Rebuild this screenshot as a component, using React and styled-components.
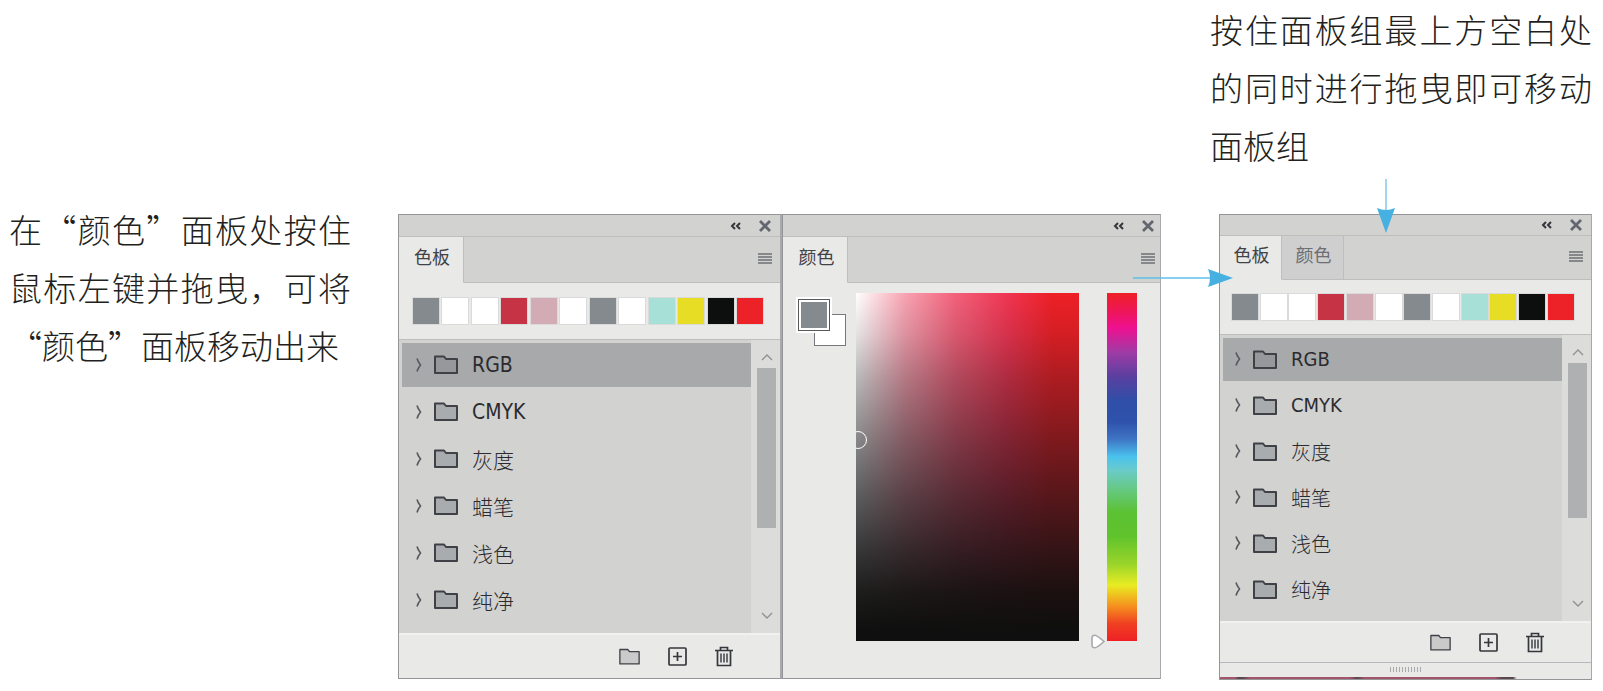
import { useState } from 'react'
import styled, { createGlobalStyle } from 'styled-components'

const GlobalStyle = createGlobalStyle`
  * {
    box-sizing: border-box;
  }
  body {
    margin: 0;
    background: #fff;
    color: #231f20;
    font-family: 'DejaVu Sans Condensed', 'Noto Sans CJK SC', sans-serif;
  }
  button {
    margin: 0;
    padding: 0;
    border: none;
    background: none;
    color: inherit;
    font: inherit;
    cursor: pointer;
  }
  svg {
    display: block;
  }
`

const Page = styled.main`
  display: flex;
  align-items: flex-start;
  padding: 0 11px 12px 9px;
`

const Caption = styled.p`
  margin: 0;
  font-family: 'Noto Sans CJK SC', sans-serif;
  font-size: 33px;
  font-weight: 300;
  line-height: 58px;
  text-align: justify;
`

const LeftNote = styled.div`
  flex: 0 0 342px;
  padding-top: 200px;
`

const Docked = styled.div`
  flex: 1;
  display: flex;
  align-items: stretch;
  margin: 214px 49px 0 47px;
`

const RightColumn = styled.div`
  flex: 0 0 382px;
`

const NoteAbove = styled.div`
  height: 214px;
`

const GroupWrapper = styled.div`
  position: relative;
  margin-left: 9px;
`

const Panel = styled.section`
  display: flex;
  flex-direction: column;
  flex: ${(props) => props.$grow || 1} 1 0;
  min-width: 0;
  border: 1px solid #939598;
  border-right: ${(props) => (props.$docked ? '2px' : '1px')} solid #a7a9ac;
  background: #e9e9e8;
`

const TitleBar = styled.header`
  display: flex;
  align-items: center;
  justify-content: flex-end;
  gap: 18px;
  height: ${(props) => (props.$dense ? '21px' : '22px')};
  padding-right: ${(props) => (props.$edge ? '6px' : '9px')};
  border-bottom: 1px solid #bebebe;
  background: #d2d2d1;
`

const TabBar = styled.div`
  display: flex;
  height: ${(props) => (props.$dense ? '44px' : '46px')};
  background: #d2d2d1;
`

const Tab = styled.button`
  width: ${(props) => (props.$dense ? '62px' : '65px')};
  padding: 0 0 7px 2px;
  border-right: 1px solid #bebebe;
  border-bottom: 1px solid ${(props) => (props.$active ? '#e9e9e8' : '#bebebe')};
  background: ${(props) => (props.$active ? '#e9e9e8' : '#cfcfcf')};
  color: ${(props) => (props.$active ? '#414247' : '#6d6e73')};
  font-size: 18px;
`

const TabSpace = styled.div`
  flex: 1;
  display: flex;
  align-items: center;
  justify-content: flex-end;
  padding-right: ${(props) => (props.$edge ? '5px' : '8px')};
  padding-bottom: 3px;
  border-bottom: 1px solid #bebebe;
`

const Swatches = styled.div`
  display: flex;
  align-items: center;
  justify-content: space-between;
  height: ${(props) => (props.$dense ? '55px' : '57px')};
  padding: 0 16px 0 ${(props) => (props.$dense ? '11px' : '13px')};
  border-bottom: 1px solid #bebebe;
`

const Swatch = styled.button`
  width: 28px;
  height: 28px;
  border: 1px solid #dadada;
  background: ${(props) => props.$color};
`

const ListArea = styled.div`
  display: flex;
  background: #d2d2d1;
`

const List = styled.ul`
  flex: 1;
  display: flex;
  flex-direction: column;
  gap: 3px;
  margin: 0;
  padding: 3px 0 ${(props) => (props.$dense ? '10px' : '11px')} 3px;
  list-style: none;
`

const Row = styled.button`
  display: flex;
  align-items: center;
  width: 100%;
  height: ${(props) => (props.$dense ? '43px' : '44px')};
  padding: 0 0 1px ${(props) => (props.$dense ? '11px' : '13px')};
  background: ${(props) => (props.$selected ? '#a7a9ab' : 'transparent')};
  font-size: ${(props) => (props.$dense ? '20px' : '21px')};
  font-weight: 300;
  text-align: left;
  color: #2b2b2f;
`

const ChevronSlot = styled.span`
  width: 19px;
`

const RowLabel = styled.span`
  margin-left: 14px;
`

const Scrollbar = styled.div`
  display: flex;
  flex-direction: column;
  width: 29px;
  padding-left: 6px;
  background: #dcdcda;
`

const ScrollButton = styled.button`
  display: flex;
  align-items: center;
  justify-content: center;
  width: 19px;
  height: ${(props) => (props.$down ? '36px' : '28px')};
  padding-top: ${(props) => (props.$down ? '0' : '6px')};
`

const ScrollTrack = styled.div`
  flex: 1;
  width: 19px;
`

const ScrollThumb = styled.div`
  height: 70%;
  background: #aeb0b2;
`

const Footer = styled.footer`
  display: flex;
  align-items: center;
  justify-content: flex-end;
  gap: 28px;
  height: ${(props) => (props.$dense ? '41px' : '45px')};
  padding: 0 47px 0 0;
  border-top: 2px solid #f1f1f1;
`

const Grip = styled.div`
  display: flex;
  justify-content: center;
  gap: 2px;
  height: 15px;
  padding-top: 4px;
  border-top: 1px solid #b5b9be;
`

const GripMark = styled.span`
  width: 1px;
  height: 5px;
  background: #a7a9ac;
`

const UnderStrip = styled.div`
  height: 2px;
  background: linear-gradient(
    to right,
    #a4556b 0 4%, #59474d 5% 6%,
    #a4556b 8% 35%, #59474d 37%,
    #a4556b 39% 74%, #59474d 76% 79%,
    #e9e9e8 80%
  );
`

const PickerBody = styled.div`
  flex: 1;
  display: flex;
  align-items: stretch;
  padding: 10px 23px 37px 14px;
`

const ColorPair = styled.div`
  position: relative;
  flex: 0 0 59px;
`

const Background = styled.button`
  position: absolute;
  left: 17px;
  top: 21px;
  width: 32px;
  height: 32px;
  border: 1px solid #77787b;
  background: #fff;
`

const Foreground = styled.button`
  position: absolute;
  left: 1px;
  top: 6px;
  width: 32px;
  height: 32px;
  border: 1px solid #58595b;
  outline: 2px solid #fff;
  box-shadow: inset 0 0 0 2px #fff;
  background: #858a8f;
`

const Field = styled.div`
  flex: 1;
  position: relative;
  overflow: hidden;
  background:
    linear-gradient(
      to bottom,
      rgba(14, 15, 14, 0),
      rgba(16, 18, 20, 0.12) 12%,
      rgba(16, 18, 20, 0.3) 25%,
      rgba(16, 18, 20, 0.5) 42%,
      rgba(16, 18, 20, 0.68) 58%,
      rgba(16, 17, 18, 0.84) 74%,
      rgba(14, 15, 14, 0.94) 86%,
      #0e0f0e 97%
    ),
    linear-gradient(
      to right,
      #fff,
      #f8a3b2 22%,
      #f3607a 45%,
      #f03552 68%,
      #ee2026 88%
    );
`

const Ring = styled.span`
  position: absolute;
  left: -7px;
  top: 138px;
  width: 18px;
  height: 18px;
  border: 1px solid #fff;
  border-radius: 50%;
`

const HueBox = styled.label`
  position: relative;
  flex: 0 0 58px;
  padding-left: 28px;
`

const HueBar = styled.span`
  display: block;
  height: 100%;
  background: linear-gradient(
    to bottom,
    #ee2025, #ee1560 6%, #ee1090 10%,
    #a03ba5 17%, #5a3fa0 24%, #2f4fa8 31%,
    #2f52ac 37%, #3f74c4 42%, #4ac2ee 47%,
    #6acbc8 51%, #66c988 56%, #5cc233 63%,
    #60c32c 70%, #9bd52a 78%, #e9ec22 84%,
    #f5901e 90%, #f04022 95%, #ee2025
  );
`

const HueInput = styled.input`
  position: absolute;
  inset: 0;
  width: 100%;
  height: 100%;
  margin: 0;
  opacity: 0;
  writing-mode: vertical-lr;
  direction: rtl;
  cursor: pointer;
`

const HueMarker = styled.span`
  position: absolute;
  left: 12px;
  margin-bottom: -8px;
`

const ArrowDown = styled.svg`
  position: absolute;
  left: 158px;
  top: -35px;
`

const ArrowRight = styled.svg`
  position: absolute;
  left: -86px;
  top: 55px;
`

const swatchColors = [
  '#858a8f',
  '#ffffff',
  '#ffffff',
  '#c63344',
  '#d3abb4',
  '#ffffff',
  '#858a8f',
  '#ffffff',
  '#a6e0d6',
  '#e8dd25',
  '#0d0e0e',
  '#ed2228',
]

const groups = ['RGB', 'CMYK', '灰度', '蜡笔', '浅色', '纯净']

const CollapseIcon = () => (
  <svg width='11' height='8' viewBox='0 0 11 8' fill='none' stroke='#35373c' strokeWidth='2'>
    <path d='M5 1 2 4l3 3M10 1 7 4l3 3' />
  </svg>
)

const CloseIcon = () => (
  <svg width='12' height='12' viewBox='0 0 12 12' fill='none' stroke='#63666e' strokeWidth='2.800'>
    <path d='M1 1l10 10M11 1 1 11' />
  </svg>
)

const MenuIcon = () => (
  <svg width='14' height='11' viewBox='0 0 14 11' stroke='#6d7076' strokeWidth='1.400'>
    <path d='M0 1h14M0 4h14M0 7h14M0 10h14' />
  </svg>
)

const ChevronIcon = () => (
  <svg width='8' height='16' viewBox='0 0 8 16' fill='none' stroke='#58595e' strokeWidth='1.6'>
    <path d='M2 1.500Q3 5 5.500 8 3 11 2 14.500' />
  </svg>
)

const FolderIcon = ({ small, selected }) => (
  <svg
    width={small ? 21 : 24}
    height={small ? 17 : 19}
    viewBox='0 0 24 19'
    fill={selected ? '#96989b' : small ? '#c9cac9' : '#a9acae'}
    stroke='#3f4147'
    strokeWidth={small ? 1.5 : 2}
    strokeLinejoin='round'
  >
    <path d='M1 1.500h9l2 2.500h11v14H1z' />
  </svg>
)

const NewIcon = () => (
  <svg width='19' height='19' viewBox='0 0 19 19' fill='none' stroke='#35373c' strokeWidth='1.700'>
    <rect x='1' y='1' width='17' height='17' rx='1' />
    <path d='M5 9.500h9M9.500 5v9' />
  </svg>
)

const TrashIcon = () => (
  <svg width='18' height='21' viewBox='0 0 18 21' fill='none' stroke='#35373c' strokeWidth='1.7'>
    <path d='M0 4.500h18M5.500 4V1.500h7V4M2.500 5v14.500h13V5' />
    <path d='M6 7.500v9M9 7.500v9M12 7.500v9' strokeWidth='1.4' />
  </svg>
)

const ScrollArrow = ({ down }) => (
  <svg width='12' height='7' viewBox='0 0 12 7' fill='none' stroke='#8f9194' strokeWidth='1.4'>
    <path d={down ? 'M1 1l5 5 5-5' : 'M1 6l5-5 5 5'} />
  </svg>
)

const PanelTitle = ({ dense, edge }) => (
  <TitleBar $dense={dense} $edge={edge}>
    <button aria-label='折叠'>
      <CollapseIcon />
    </button>
    <button aria-label='关闭'>
      <CloseIcon />
    </button>
  </TitleBar>
)

const PanelTabs = ({ tabs, dense, edge }) => (
  <TabBar $dense={dense}>
    {tabs.map((tab, i) => (
      <Tab key={tab} $active={i === 0} $dense={dense}>
        {tab}
      </Tab>
    ))}
    <TabSpace $edge={edge}>
      <button aria-label='菜单'>
        <MenuIcon />
      </button>
    </TabSpace>
  </TabBar>
)

const SwatchPanel = ({ tabs, dense, grow }) => {
  const [selected, setSelected] = useState('RGB')

  return (
    <Panel $grow={grow} $docked={!dense}>
      <PanelTitle dense={dense} />
      <PanelTabs tabs={tabs} dense={dense} />
      <Swatches $dense={dense}>
        {swatchColors.map((color, i) => (
          <Swatch key={i} $color={color} aria-label={color} />
        ))}
      </Swatches>
      <ListArea>
        <List $dense={dense}>
          {groups.map((name) => (
            <li key={name}>
              <Row
                $dense={dense}
                $selected={name === selected}
                onClick={() => setSelected(name)}
              >
                <ChevronSlot>
                  <ChevronIcon />
                </ChevronSlot>
                <FolderIcon selected={name === selected} />
                <RowLabel>{name}</RowLabel>
              </Row>
            </li>
          ))}
        </List>
        <Scrollbar>
          <ScrollButton aria-label='向上'>
            <ScrollArrow />
          </ScrollButton>
          <ScrollTrack>
            <ScrollThumb />
          </ScrollTrack>
          <ScrollButton $down aria-label='向下'>
            <ScrollArrow down />
          </ScrollButton>
        </Scrollbar>
      </ListArea>
      <Footer $dense={dense}>
        <button aria-label='新建组'>
          <FolderIcon small />
        </button>
        <button aria-label='新建色板'>
          <NewIcon />
        </button>
        <button aria-label='删除'>
          <TrashIcon />
        </button>
      </Footer>
      {dense && (
        <>
          <Grip>
            {Array.from({ length: 11 }, (_, i) => (
              <GripMark key={i} />
            ))}
          </Grip>
          <UnderStrip />
        </>
      )}
    </Panel>
  )
}

const ColorPanel = ({ grow }) => {
  const [hue, setHue] = useState(0)

  return (
    <Panel $grow={grow}>
      <PanelTitle edge />
      <PanelTabs tabs={['颜色']} edge />
      <PickerBody>
        <ColorPair>
          <Background aria-label='背景色' />
          <Foreground aria-label='前景色' />
        </ColorPair>
        <Field>
          <Ring />
        </Field>
        <HueBox>
          <HueBar />
          <HueMarker style={{ bottom: `${(hue / 360) * 100}%` }}>
            <svg width='14' height='15' viewBox='0 0 14 15' fill='#fff' stroke='#a7a9ac' strokeWidth='1.6'>
              <path d='M1 4Q1 1 4 1.200 6 1.200 13 7.500 6 13.800 4 13.800 1 14 1 11z' />
            </svg>
          </HueMarker>
          <HueInput
            type='range'
            min='0'
            max='360'
            value={hue}
            aria-label='色相'
            onChange={(e) => setHue(Number(e.target.value))}
          />
        </HueBox>
      </PickerBody>
    </Panel>
  )
}

const App = () => {
  return (
    <>
      <GlobalStyle />
      <Page lang='zh-CN'>
        <LeftNote>
          <Caption>
            在“颜色”面板处按住鼠标左键并拖曳，可将“颜色”面板移动出来
          </Caption>
        </LeftNote>
        <Docked>
          <SwatchPanel tabs={['色板']} grow={384} />
          <ColorPanel grow={379} />
        </Docked>
        <RightColumn>
          <NoteAbove>
            <Caption>按住面板组最上方空白处的同时进行拖曳即可移动面板组</Caption>
          </NoteAbove>
          <GroupWrapper>
            <SwatchPanel tabs={['色板', '颜色']} dense />
            <ArrowDown width='18' height='54' viewBox='0 0 18 54' fill='#46b1e1'>
              <path d='M8.200 0h1.600v32H8.200z' fill='#8ccbe6' />
              <path d='M0 29q9 4 18 0L9 54z' />
            </ArrowDown>
            <ArrowRight width='100' height='18' viewBox='0 0 100 18' fill='#46b1e1'>
              <path d='M0 8.200h80v1.600H0z' fill='#5cc0e6' />
              <path d='M75 0q4 9 0 18l25-9z' />
            </ArrowRight>
          </GroupWrapper>
        </RightColumn>
      </Page>
    </>
  )
}

export default App
